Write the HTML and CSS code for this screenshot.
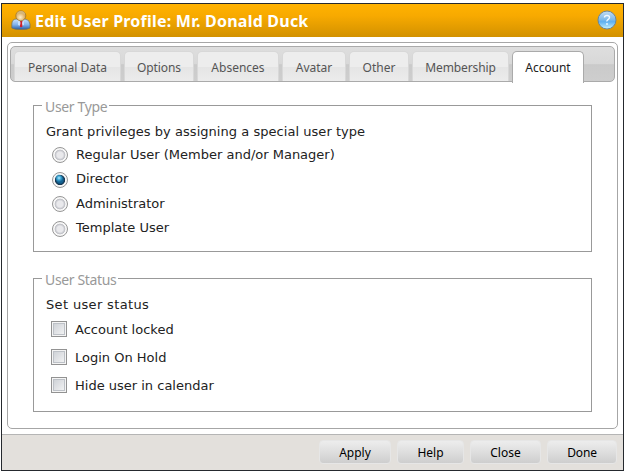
FILE: index.html
```
<!DOCTYPE html>
<html lang="en">
<head>
<meta charset="utf-8">
<title>Edit User Profile</title>
<link rel="stylesheet" href="styles.css">
</head>
<body>
<main class="dialog">
  <header class="titlebar">
    <svg class="user-icon" viewBox="0 0 20 20" aria-hidden="true">
      <defs>
        <linearGradient id="coat" x2="0" y2="1"><stop stop-color="#c9e2ff"/><stop offset=".55" stop-color="#81b2ea"/><stop offset="1" stop-color="#255daa"/></linearGradient>
        <radialGradient id="face" cx=".45" cy=".65"><stop stop-color="#fff0cc"/><stop offset="1" stop-color="#d8a658"/></radialGradient>
      </defs>
      <path d="M.8 18V14Q1 9.200 5 9H14Q18.500 9.500 19 14V18Q17 19.500 10 19.500T.8 18Z" fill="url(#coat)" stroke="#7a7558" stroke-width=".8"/>
      <path d="M7 10L10 12.500 13 10 13 15 10 16 7 15Z" fill="#c5defb"/>
      <path d="M9 11H11.500L11 13 11.500 16.500 10 17.500 8.800 16.500 9.500 13Z" fill="#cf2029"/>
      <circle cx="9.800" cy="5.800" r="5" fill="url(#face)" stroke="#9e7628" stroke-width=".8"/>
      <path d="M5.500 5Q6 1 10 1T14.200 5Q9 2.500 5.500 5Z" fill="#d5b679"/>
    </svg>
    <h1>Edit User Profile: Mr. Donald Duck</h1>
    <svg class="help-icon" viewBox="0 0 20 20" aria-hidden="true">
      <defs><linearGradient id="orb" x2="0" y2="1"><stop stop-color="#c4dcf2"/><stop offset=".45" stop-color="#83bce9"/><stop offset=".6" stop-color="#5eb0f0"/><stop offset="1" stop-color="#c9f4ff"/></linearGradient></defs>
      <circle cx="10" cy="10" r="9" fill="url(#orb)" stroke="#68869c"/>
      <path d="M7.500 7.500Q7.500 5.500 10 5.500T12.500 7.500Q12.500 8.500 11 9.600T10 11.500" fill="none" stroke="#f2f9ff" stroke-width="1.400"/>
      <circle cx="10" cy="14" r=".9" fill="#f2f9ff"/>
    </svg>
  </header>
  <section class="panel">
    <nav class="tabs">
      <a class="tab personal"><span>Personal Data</span></a>
      <a class="tab options"><span>Options</span></a>
      <a class="tab absences"><span>Absences</span></a>
      <a class="tab avatar"><span>Avatar</span></a>
      <a class="tab other"><span>Other</span></a>
      <a class="tab membership"><span>Membership</span></a>
      <a class="tab account active"><span>Account</span></a>
    </nav>
    <section class="group types">
      <h2>User Type</h2>
      <p>Grant privileges by assigning a special user type</p>
      <label><i class="radio"></i><span>Regular User (Member and/or Manager)</span></label>
      <label><i class="radio checked"></i><span>Director</span></label>
      <label><i class="radio"></i><span>Administrator</span></label>
      <label><i class="radio"></i><span>Template User</span></label>
    </section>
    <section class="group statuses">
      <h2>User Status</h2>
      <p>Set user status</p>
      <label><i class="checkbox"></i><span>Account locked</span></label>
      <label><i class="checkbox"></i><span>Login On Hold</span></label>
      <label><i class="checkbox"></i><span>Hide user in calendar</span></label>
    </section>
  </section>
  <footer class="actions">
    <button class="apply">Apply</button>
    <button class="help">Help</button>
    <button class="close">Close</button>
    <button class="done">Done</button>
  </footer>
</main>
</body>
</html>
```
FILE: styles.css
```
* { box-sizing: border-box; }
body { margin: 0; background: #fff; font: 13px/16px "DejaVu Sans", sans-serif; color: #222; }
h1, h2, p { margin: 0; white-space: nowrap; }
.dialog { width: 623px; height: 468px; margin: 3px 0 0 1px; border: 1px solid #25292e; display: flex; flex-direction: column; }
.titlebar { height: 33px; flex: none; display: flex; align-items: center; padding: 0 6px 0 9px; background: linear-gradient(#ffb200, #f8aa00 35%, #d29100); }
.user-icon { width: 20px; height: 20px; margin-top: -1px; }
.titlebar h1 { margin: 0 auto 0 4px; font: bold 16px/20px "Noto Sans", sans-serif; letter-spacing: .22px; color: #fff; }
.help-icon { width: 20px; height: 20px; margin-top: -1px; }
.panel { flex: none; width: 611px; height: 387px; margin: 5px 0 0 5px; padding: 3px 2px; border: 1px solid #a6a6a6; border-radius: 5px; }
.tabs { height: 36px; display: flex; align-items: flex-start; gap: 3px; padding: 4px 0 0 3px; border: 1px solid #aaa; border-radius: 5px; background: linear-gradient(#dedede, #d8d8d8 49%, #cacaca 52%, #cecece); }
.tab { height: 30px; display: flex; align-items: center; justify-content: center; padding-top: 3px; border: 1px solid #d8d8d8; border-bottom: 0; border-radius: 5px 5px 0 0; background: linear-gradient(#ededed 50%, #e5e5e5 53%, #ececec); color: #555; font: 12px/16px "Noto Sans", sans-serif; white-space: nowrap; }
.personal { width: 107px; }
.options { width: 70px; letter-spacing: -.1px; }
.absences { width: 82px; }
.avatar { width: 64px; }
.other { width: 60px; }
.membership { width: 97px; letter-spacing: -.12px; }
.account { width: 72px; letter-spacing: -.05px; }
.tab.active { height: 32px; padding-bottom: 2px; border-color: #aaa; background: #fff; color: #222; }
.group { width: 559px; margin-left: 23px; border: 1px solid #999; padding-left: 12px; }
.group h2 { width: max-content; margin: -7px 0 0 -4px; padding: 0 2px 0 3px; background: #fff; color: #999; font: 14px/16px "Noto Sans", sans-serif; letter-spacing: -.35px; }
.group p { margin-top: 9px; }
.types p { letter-spacing: .04px; }
.statuses p { letter-spacing: .35px; }
.group label { display: flex; white-space: nowrap; }
.types { height: 147px; margin-top: 23px; }
.types label { height: 24.500px; padding-left: 6px; gap: 8px; }
.types p + label { margin-top: 7px; }
.types label span { margin-top: -.5px; }
.statuses { height: 134px; margin-top: 26px; }
.statuses label { height: 28px; padding-left: 5px; gap: 8px; }
.statuses p + label { margin-top: 8px; }
.statuses label span { margin-top: 1px; }
.radio { width: 16px; height: 16px; border: 1px solid #969696; border-radius: 50%; background: radial-gradient(circle at 7px 7px, #e9e9ec 0 3px, #c7c8ce 4.500px, #bfc0c5 5px, #f7f7f7 5.700px); }
.radio.checked { background: radial-gradient(circle at 6px 5px, #b4eaff 0, #3ba5d3 2px, transparent 4px), radial-gradient(circle at 7px 7px, #146393 0 3px, #15334d 4.700px, #f7f7f7 5.500px); }
.checkbox { width: 16px; height: 16px; border: 1px solid #929292; background: linear-gradient(135deg, #c8ccd2, #f8f8f8); box-shadow: inset 0 0 0 1px #f4f4f4, inset 0 0 0 2px #bdc1c7; }
.actions { height: 36px; margin-top: auto; display: flex; justify-content: flex-end; gap: 6px; padding: 5px 6px 0 0; border-top: 1px solid #b5b5b5; background: #e3e0dc; }
.actions button { height: 24px; border: 1px solid #e6e6e6; border-radius: 4px; padding: 1px 0 0; background: linear-gradient(#ededed, #dedede 50%, #cecece); color: #000; font: 12px/16px "Noto Sans", sans-serif; }
.apply { width: 72px; }
.actions .help { width: 67px; }
.close { width: 71px; }
.done { width: 70px; letter-spacing: -.2px; }
```
